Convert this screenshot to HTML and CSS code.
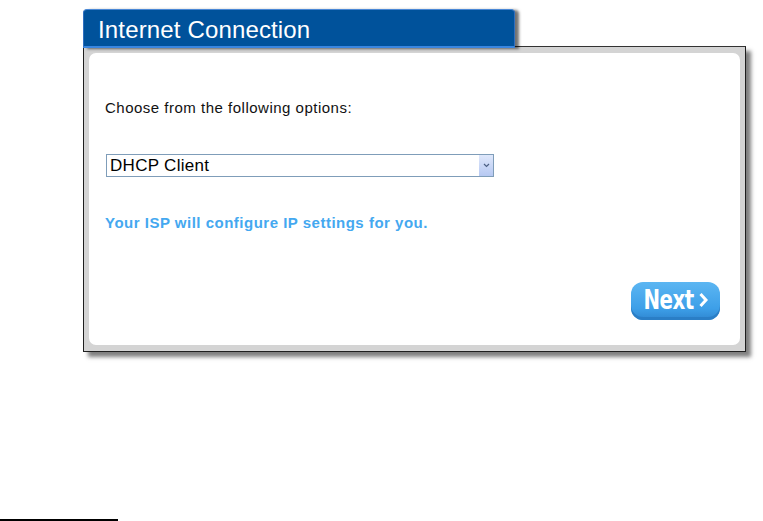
FILE: index.html
```html
<!DOCTYPE html>
<html lang="en">
<head>
    <meta charset="UTF-8">
    <title>Internet Connection</title>
    <link rel="stylesheet" href="styles.css">
</head>
<body>
    <div class="wizard">
        <div class="tab">Internet Connection</div>
        <div class="frame">
            <div class="inner">
                <p class="prompt">Choose from the following options:</p>
                <div class="select-wrap">
                    <select class="conn-select">
                        <option>DHCP Client</option>
                        <option>Static IP</option>
                        <option>PPPoE</option>
                    </select>
                    <span class="select-arrow">
                        <svg width="7" height="5" viewBox="0 0 7 5"><path d="M1 1 L3.5 3.5 L6 1" fill="none" stroke="#4d6185" stroke-width="1.2"/></svg>
                    </span>
                </div>
                <p class="hint">Your ISP will configure IP settings for you.</p>
                <div class="actions">
                    <button class="next-btn">
                        <span class="label">Next</span>
                        <svg class="chev" width="9" height="16" viewBox="0 0 9 16"><path d="M1.5 2 L7 8 L1.5 14" fill="none" stroke="#fff" stroke-width="3"/></svg>
                    </button>
                </div>
            </div>
        </div>
    </div>
    <div class="footnote-rule"></div>
</body>
</html>
```

FILE: styles.css
```css
body {
    margin: 0;
    font-family: "Liberation Sans", Arial, sans-serif;
    background: #fff;
    height: 521px;
    overflow: hidden;
    position: relative;
}
.wizard {
    width: 663px;
    margin: 9px 0 0 83px;
}
.tab {
    height: 36px;
    box-sizing: content-box;
    background: #00529b;
    border: 1px solid #2f6fc0;
    border-top-color: #4a88d6;
    border-bottom: 2px solid #3a86e0;
    border-radius: 4px 4px 0 0;
    box-shadow: 4px 1px 3px rgba(0, 0, 0, 0.55);
    color: #fff;
    font-size: 24px;
    letter-spacing: 0.15px;
    line-height: 40px;
    padding-left: 14px;
    width: 416px;
    position: relative;
    z-index: 2;
}
.frame {
    height: 292px;
    border: 1px solid #1e1e1e;
    border-top: 1px solid #333;
    margin-top: -2px;
    background: #d4d4d4;
    padding: 6px 5px 6px 5px;
    box-shadow: 5px 5px 4px rgba(0, 0, 0, 0.5);
}
.inner {
    height: 100%;
    box-sizing: border-box;
    background: #fff;
    border-radius: 7px;
    padding: 46px 16px 0 16px;
    display: flex;
    flex-direction: column;
}
.prompt {
    margin: 0;
    font-size: 15px;
    letter-spacing: 0.5px;
    line-height: 17px;
    color: #111;
}
.select-wrap {
    position: relative;
    width: 388px;
    margin: 38px 0 0 1px;
}
.conn-select {
    display: block;
    width: 100%;
    height: 23px;
    appearance: none;
    -webkit-appearance: none;
    border: 1px solid #7f9db9;
    border-radius: 0;
    background: #fff;
    font-family: "Liberation Sans", Arial, sans-serif;
    font-size: 17px;
    letter-spacing: 0.3px;
    color: #000;
    padding: 0 3px;
}
.select-arrow {
    position: absolute;
    right: 1px;
    top: 1px;
    width: 14px;
    height: 21px;
    background: linear-gradient(#dfe8fb, #b6c8f2);
    display: flex;
    align-items: center;
    justify-content: center;
    pointer-events: none;
}
.hint {
    margin: 37px 0 0 0;
    font-size: 15px;
    line-height: 17px;
    letter-spacing: 0.5px;
    font-weight: bold;
    color: #44a8f0;
}
.actions {
    display: flex;
    justify-content: flex-end;
    margin-top: 51px;
    padding-right: 4px;
}
.next-btn {
    width: 89px;
    height: 38px;
    border: none;
    border-radius: 12px;
    background: linear-gradient(#5cb6f2, #3d9fe8 70%, #2f86d0);
    box-shadow: inset 0 -3px 0 #2a7ec6;
    color: #fff;
    font-family: "DejaVu Sans Condensed", "Liberation Sans Narrow", sans-serif;
    font-weight: bold;
    padding: 0 0 3px 0;
    display: flex;
    align-items: center;
    justify-content: center;
    gap: 5px;
}
.next-btn .label {
    font-size: 22px;
    letter-spacing: -0.5px;
    display: inline-block;
    transform: scaleY(1.2);
}
.footnote-rule {
    position: absolute;
    left: 0;
    top: 519px;
    width: 118px;
    height: 2px;
    background: #000;
}
```
